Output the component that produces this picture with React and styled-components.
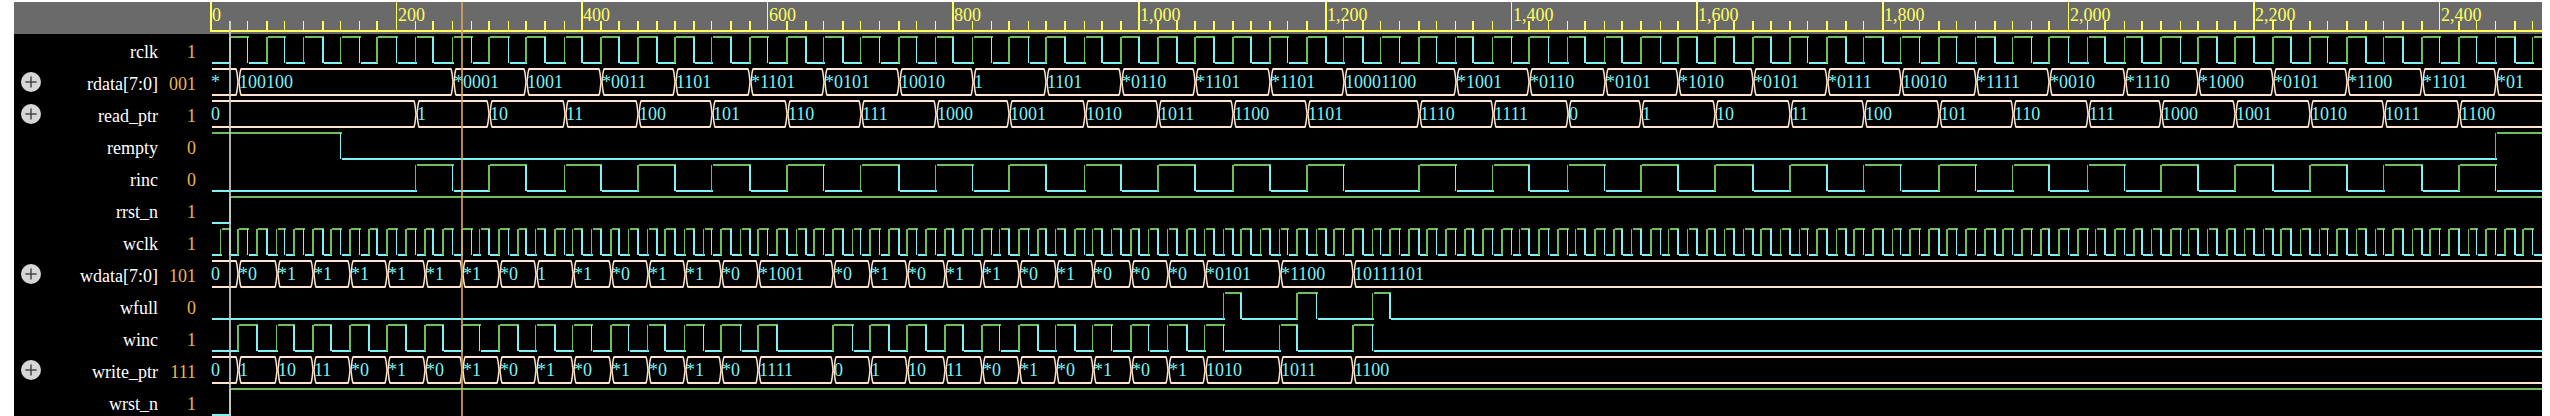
import React from "react";
import styled, { createGlobalStyle } from "styled-components";

const GlobalStyle = createGlobalStyle`
  html, body { margin: 0; padding: 0; background: #fff; }
  body { overflow: hidden; }
`;

const HIGH = "#6fbf58";
const LOW = "#7df3f7";
const BUS = "#ffe4cb";
const RULER = "#ffff5c";

const WAVE_LEFT = 210;
const WAVE_RIGHT = 2542;
const WAVE_WIDTH = WAVE_RIGHT - WAVE_LEFT;

/* Snapped pixel columns of the time grid; a quote marks a one pixel wide edge. */
const parse = (s) =>
  s.trim().split(/\s+/).map((v) => ({ x: parseInt(v, 10), w: v.endsWith("'") ? 1 : 2 }));

const TICKS = parse(`
  210 229 247' 266 284' 303' 322 340' 359' 376
  396' 415' 432 452' 471' 488 508' 525 544 564'
  581 600 618 637 656 674 693 711' 730 749
  767' 786 805 823' 842 860' 879' 898 916' 935'
  952 972' 991' 1008 1028' 1045 1064 1084' 1101 1120
  1138 1157 1176 1194 1213 1232 1250 1269 1287' 1306
  1325 1343' 1362 1380' 1399' 1418 1436' 1455' 1472 1492'
  1511' 1528 1548' 1567' 1584 1604' 1621 1640 1660' 1677
  1696 1714 1733 1752 1770 1789 1807' 1826 1845 1863'
  1882 1900' 1919' 1938 1956' 1975' 1994 2012' 2031' 2048
  2068' 2087' 2104 2124' 2141 2160 2180' 2197 2216 2234
  2253 2272 2290 2309 2327' 2346 2365 2383' 2402 2421
  2439' 2458 2476' 2495' 2514 2532'`);

const HALF_TICKS = parse(`
  220' 237 256 276' 293 312 330 349 368 386
  405 424 442 461 479' 498 517 535' 554 572'
  591' 610 628' 647' 664 684' 703' 720 740' 757
  776 796' 813 832 852' 869 888 906 925 944
  962 981 999' 1018 1037 1055' 1074 1092' 1111' 1130
  1148' 1167' 1186 1204' 1223' 1240 1260' 1279' 1296 1316'
  1333 1352 1372' 1389 1408 1426 1445 1464 1482 1501
  1519' 1538 1557 1575' 1594 1613 1631' 1650 1668' 1687'
  1706 1724' 1743' 1760 1780' 1799' 1816 1836' 1853 1872
  1892' 1909 1928 1946 1965 1984 2002 2021 2040 2058
  2077 2095' 2114 2133 2151' 2170 2188' 2207' 2226 2244'
  2263' 2280 2300' 2319' 2336 2356' 2375' 2392 2412' 2429
  2448 2468' 2485 2504 2522`);

/* Edge for a time counted in steps of ten units. */
const edgeAt = (u) => (u % 2 ? HALF_TICKS[(u - 1) / 2] : TICKS[u / 2]);

const range = (from, to, step) => {
  const out = [];
  for (let i = from; i <= to; i += step) out.push(i);
  return out;
};

/* Bus contents as "step:value" pairs. */
const bus = (s) =>
  s.trim().split(/\s+/).map((p) => {
    const i = p.indexOf(":");
    return { at: Number(p.slice(0, i)), value: p.slice(i + 1) };
  });

const SIGNALS = [
  { name: "rclk", value: "1", start: 0, toggles: range(2, 250, 2) },
  {
    name: "rdata[7:0]", value: "001",
    bus: bus(`0:* 3:100100 26:*0001 34:1001 42:*0011 50:1101 58:*1101 66:*0101 74:10010 82:1
      90:1101 98:*0110 106:*1101 114:*1101 122:10001100 134:*1001 142:*0110 150:*0101 158:*1010
      166:*0101 174:*0111 182:10010 190:*1111 198:*0010 206:*1110 214:*1000 222:*0101 230:*1100
      238:*1101 246:*01`),
  },
  {
    name: "read_ptr", value: "1",
    bus: bus(`0:0 22:1 30:10 38:11 46:100 54:101 62:110 70:111 78:1000 86:1001 94:1010 102:1011
      110:1100 118:1101 130:1110 138:1111 146:0 154:1 162:10 170:11 178:100 186:101 194:110
      202:111 210:1000 218:1001 226:1010 234:1011 242:1100`),
  },
  { name: "rempty", value: "0", start: 1, toggles: [14, 246] },
  { name: "rinc", value: "0", start: 0, toggles: [...range(22, 122, 4), ...range(130, 246, 4)] },
  { name: "rrst_n", value: "1", start: 0, toggles: [2] },
  { name: "wclk", value: "1", start: 0, toggles: range(1, 250, 1) },
  {
    name: "wdata[7:0]", value: "101",
    bus: bus(`0:0 3:*0 7:*1 11:*1 15:*1 19:*1 23:*1 27:*1 31:*0 35:1 39:*1 43:*0 47:*1 51:*1
      55:*0 59:*1001 67:*0 71:*1 75:*0 79:*1 83:*1 87:*0 91:*1 95:*0 99:*0 103:*0 107:*0101
      115:*1100 123:10111101`),
  },
  { name: "wfull", value: "0", start: 0, toggles: [109, 111, 117, 119, 125, 127] },
  {
    name: "winc", value: "1", start: 0,
    toggles: [...range(3, 61, 2), ...range(67, 109, 2), 115, 117, 123, 125],
  },
  {
    name: "write_ptr", value: "111",
    bus: bus(`0:0 3:1 7:10 11:11 15:*0 19:*1 23:*0 27:*1 31:*0 35:*1 39:*0 43:*1 47:*0 51:*1
      55:*0 59:1111 67:0 71:1 75:10 79:11 83:*0 87:*1 91:*0 95:*1 99:*0 103:*1 107:1010
      115:1011 123:1100`),
  },
  { name: "wrst_n", value: "1", start: 0, toggles: [2] },
];

const Viewer = styled.main`
  position: relative;
  box-sizing: border-box;
  width: 2528px;
  height: 414px;
  margin: 2px 8px 0 14px;
  overflow: hidden;
  background: #000;
  font-family: "Liberation Serif", "Times New Roman", serif;
  font-size: 18px;
`;

const Header = styled.header`
  display: flex;
  justify-content: flex-end;
  height: 32px;
  background: #6a6a6a;
`;

const Row = styled.div`
  display: grid;
  grid-template-columns: 34px 110px 38px 14px ${WAVE_WIDTH}px;
  height: 32px;
`;

const ToggleCell = styled.div`
  display: flex;
  align-items: center;
  justify-content: center;
  height: 32px;
`;

const Name = styled.div`
  line-height: 36px;
  text-align: right;
  color: #fff;
`;

const Value = styled.div`
  line-height: 36px;
  text-align: right;
  color: #edb553;
`;

const Drawing = styled.svg`
  display: block;
  overflow: hidden;
  grid-column: ${(p) => (p.$inRow ? 5 : "auto")};
`;

const BusText = styled.text`
  fill: ${LOW};
  font-size: 18px;
`;

const RulerText = styled.text`
  fill: ${RULER};
  font-size: 18px;
`;

const Cursor = styled.div`
  position: absolute;
  top: ${(p) => p.$top}px;
  bottom: 0;
  left: ${(p) => p.$left}px;
  width: 2px;
  background: ${(p) => p.$color};
`;

function PlusIcon() {
  return (
    <svg width="22" height="22" viewBox="0 0 22 22">
      <circle cx="11" cy="11" r="10" fill="#d6d6d6" />
      <path d="M11 5.4V16.6M5.4 11H16.6" stroke="#484848" strokeWidth="1.5" />
    </svg>
  );
}

function Ruler() {
  return (
    <Drawing width={WAVE_WIDTH} height="32" viewBox={`${WAVE_LEFT} 2 ${WAVE_WIDTH} 32`}>
      <rect x="210" y="30" width={WAVE_WIDTH} height="2" fill={RULER} />
      {TICKS.map((t, i) => {
        const major = i % 10 === 0;
        const y = major ? 2 : 21;
        return (
          <rect key={i} x={t.x} y={y} width={t.w} height={31 - y} fill={RULER} shapeRendering="crispEdges" />
        );
      })}
      {TICKS.map((t, i) =>
        i % 10 === 0 ? (
          <RulerText key={i} x={t.x + 2} y="21">
            {(i * 20).toLocaleString("en-US")}
          </RulerText>
        ) : null
      )}
    </Drawing>
  );
}

function DigitalWave({ start, toggles }) {
  const parts = [];
  let x = 212;
  toggles.forEach((u, i) => {
    const e = edgeAt(u);
    const level = (start + i) % 2;
    parts.push(
      <rect key={`s${i}`} x={x} y={level ? 2 : 28} width={e.x + 2 - x} height="2" fill={level ? HIGH : LOW} />,
      <rect key={`e${i}`} x={e.x} y="3" width={e.w} height="26" fill={level ? LOW : HIGH} />
    );
    x = e.x + 2;
  });
  const last = (start + toggles.length) % 2;
  parts.push(
    <rect key="last" x={x} y={last ? 2 : 28} width={WAVE_RIGHT - x} height="2" fill={last ? HIGH : LOW} />
  );
  return <g shapeRendering="crispEdges">{parts}</g>;
}

function BusWave({ segments }) {
  return segments.map((seg, i) => {
    const first = i === 0;
    const final = i === segments.length - 1;
    const a = first ? 212 : edgeAt(seg.at).x + 1.5;
    const b = final ? WAVE_RIGHT : edgeAt(segments[i + 1].at).x + 1.5;
    const l = first ? a : a + 2.5;
    const r = final ? b : b - 2.5;
    return (
      <g key={i}>
        <path d={`M${l} 3H${r}M${l} 29H${r}`} stroke={BUS} strokeWidth="2" />
        {!first && (
          <path d={`M${l} 2.5L${a + 1.5} 7L${a + 0.5} 16L${a + 1.5} 25L${l} 29.5`} stroke={BUS} strokeWidth="1.5" fill="none" />
        )}
        {!final && (
          <path d={`M${r} 2.5L${b - 1.5} 7L${b - 0.5} 16L${b - 1.5} 25L${r} 29.5`} stroke={BUS} strokeWidth="1.5" fill="none" />
        )}
        <BusText x={first ? 211 : edgeAt(seg.at).x + 2} y="21.5">{seg.value}</BusText>
      </g>
    );
  });
}

function SignalRow({ signal }) {
  return (
    <Row>
      <ToggleCell>{signal.bus && <PlusIcon />}</ToggleCell>
      <Name>{signal.name}</Name>
      <Value>{signal.value}</Value>
      <Drawing $inRow width={WAVE_WIDTH} height="32" viewBox={`${WAVE_LEFT} 0 ${WAVE_WIDTH} 32`}>
        {signal.bus ? (
          <BusWave segments={signal.bus} />
        ) : (
          <DigitalWave start={signal.start} toggles={signal.toggles} />
        )}
      </Drawing>
    </Row>
  );
}

export default function App() {
  return (
    <>
      <GlobalStyle />
      <Viewer>
        <Header>
          <Ruler />
        </Header>
        {SIGNALS.map((s) => (
          <SignalRow key={s.name} signal={s} />
        ))}
        <Cursor $left={215} $top={19} $color="rgba(205, 205, 205, 0.85)" />
        <Cursor $left={447} $top={0} $color="rgba(218, 165, 90, 0.82)" />
      </Viewer>
    </>
  );
}
